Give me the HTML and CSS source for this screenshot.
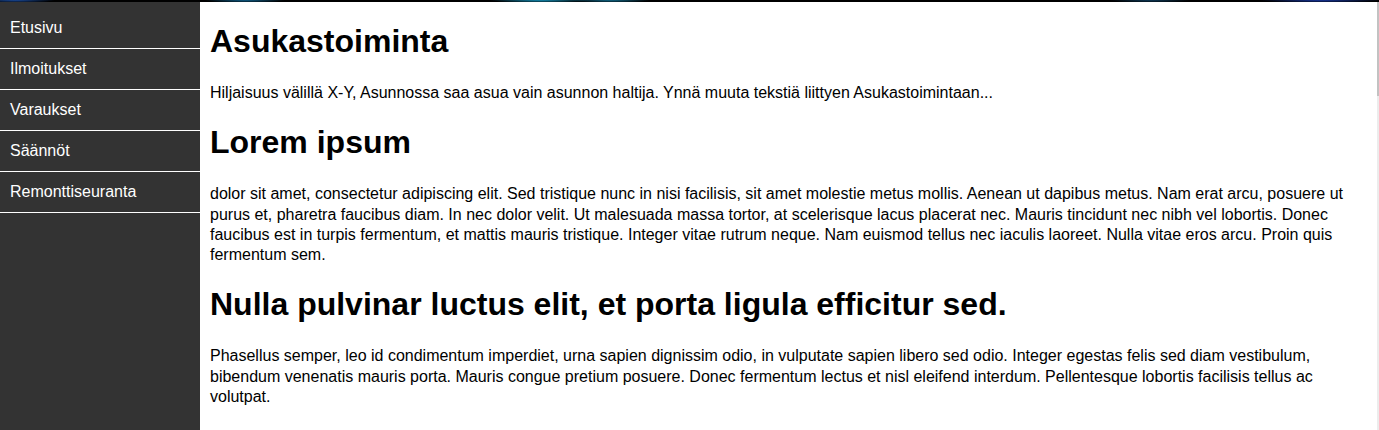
FILE: index.html
```html
<!DOCTYPE html>
<html lang="fi">
<head>
<meta charset="utf-8">
<title>Asukastoiminta</title>
<link rel="stylesheet" href="styles.css">
</head>
<body>
<div class="topbar"></div>
<div class="layout">
  <nav class="sidebar">
    <ul class="menu">
      <li><a href="#">Etusivu</a></li>
      <li><a href="#">Ilmoitukset</a></li>
      <li><a href="#">Varaukset</a></li>
      <li><a href="#">Säännöt</a></li>
      <li><a href="#">Remonttiseuranta</a></li>
    </ul>
  </nav>
  <main class="content">
    <h1>Asukastoiminta</h1>
    <p>Hiljaisuus välillä X-Y, Asunnossa saa asua vain asunnon haltija. Ynnä muuta tekstiä liittyen Asukastoimintaan...</p>
    <h1>Lorem ipsum</h1>
    <p>dolor sit amet, consectetur adipiscing elit. Sed tristique nunc in nisi facilisis, sit amet molestie metus mollis. Aenean ut dapibus metus. Nam erat arcu, posuere ut purus et, pharetra faucibus diam. In nec dolor velit. Ut malesuada massa tortor, at scelerisque lacus placerat nec. Mauris tincidunt nec nibh vel lobortis. Donec faucibus est in turpis fermentum, et mattis mauris tristique. Integer vitae rutrum neque. Nam euismod tellus nec iaculis laoreet. Nulla vitae eros arcu. Proin quis fermentum sem.</p>
    <h1>Nulla pulvinar luctus elit, et porta ligula efficitur sed.</h1>
    <p>Phasellus semper, leo id condimentum imperdiet, urna sapien dignissim odio, in vulputate sapien libero sed odio. Integer egestas felis sed diam vestibulum, bibendum venenatis mauris porta. Mauris congue pretium posuere. Donec fermentum lectus et nisl eleifend interdum. Pellentesque lobortis facilisis tellus ac volutpat.</p>
  </main>
  <div class="scrolltrack"><div class="scrollthumb"></div></div>
</div>
</body>
</html>
```
FILE: styles.css
```css
html, body {
  margin: 0;
  padding: 0;
  height: 100%;
}
body {
  font-family: "Liberation Sans", Arial, sans-serif;
  font-size: 16px;
  color: #000;
  background: #fff;
  display: flex;
  flex-direction: column;
  overflow: hidden;
}
.topbar {
  height: 2px;
  flex: none;
  background:
    radial-gradient(ellipse 40px 3px at 15px 0, #1a4a9a, transparent),
    radial-gradient(ellipse 40px 3px at 245px 0, #0f5f8a, transparent),
    radial-gradient(ellipse 50px 3px at 540px 0, #1590b8, transparent),
    radial-gradient(ellipse 40px 3px at 610px 0, #116a8a, transparent),
    radial-gradient(ellipse 40px 3px at 1150px 0, #0e3a5a, transparent),
    radial-gradient(ellipse 60px 3px at 1320px 0, #1838a0, transparent),
    #000;
}
.layout {
  flex: 1;
  display: flex;
  min-height: 0;
}
.sidebar {
  width: 200px;
  flex: none;
  background: #333;
  padding-top: 6px;
}
.menu {
  list-style: none;
  margin: 0;
  padding: 0;
}
.menu li {
  border-bottom: 1px solid #fff;
}
.menu a {
  display: block;
  height: 40px;
  line-height: 40px;
  padding: 0 10px;
  color: #fff;
  text-decoration: none;
}
.content {
  flex: 1;
  padding: 0 10px;
  min-width: 0;
}
.content h1 {
  font-size: 32px;
  margin: 21px 0 23px;
}
.content p {
  margin: 16px 0;
  line-height: 20.3px;
}
.scrolltrack {
  width: 2px;
  flex: none;
  background: #ececec;
}
.scrollthumb {
  height: 94px;
  background: #c2c2c2;
}
```
